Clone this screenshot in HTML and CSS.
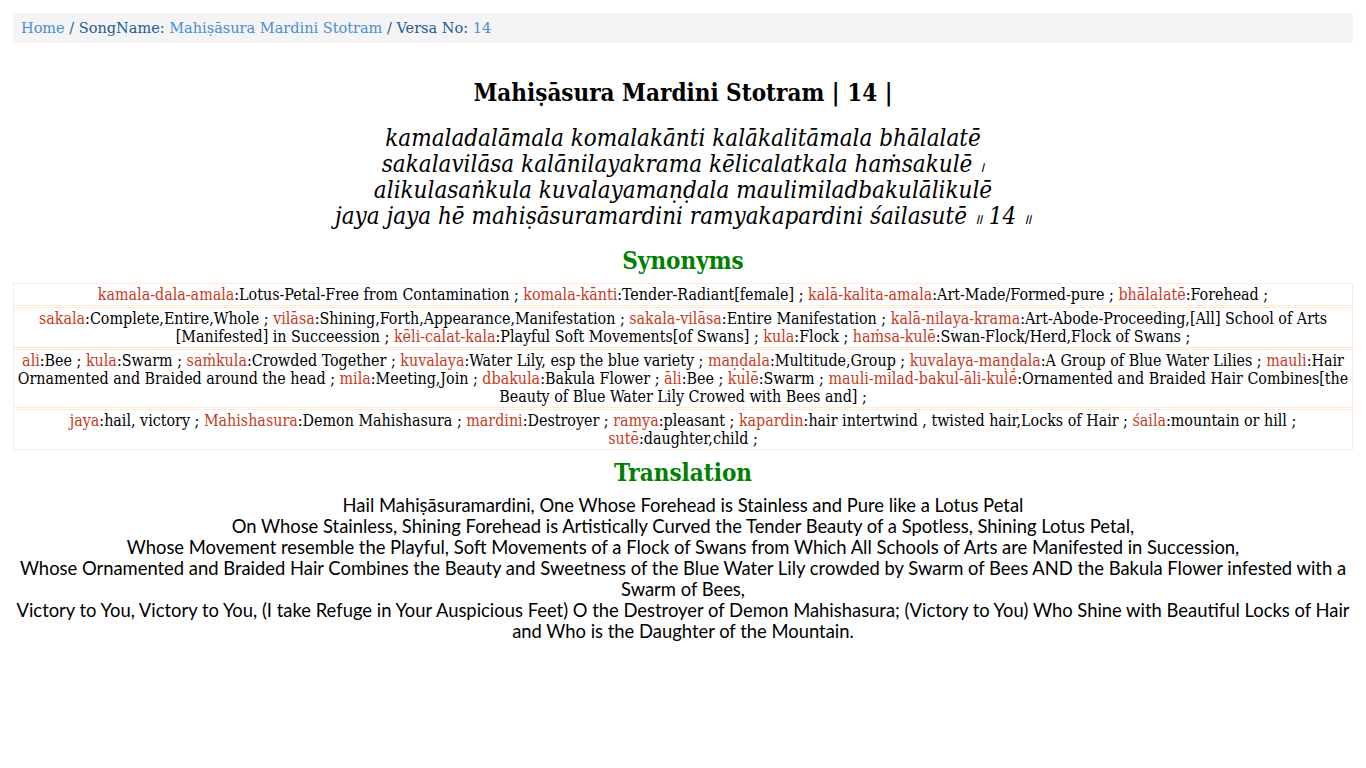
FILE: index.html
```html
<!DOCTYPE html>
<html>
<head>
<meta charset="utf-8">
<link rel="stylesheet" href="styles.css">
</head>
<body>
<div class="page">
  <nav class="crumbs">
    <a class="lnk" href="#">Home</a> <span class="dk">/ SongName:</span> <a class="lnk" href="#">Mahiṣāsura Mardini Stotram</a> <span class="dk">/ Versa No:</span> <span class="lnk">14</span>
  </nav>

  <h1 class="title">Mahiṣāsura Mardini Stotram | 14 |</h1>

  <div class="verse">
    <div class="vl">kamaladalāmala komalakānti kalākalitāmala bhālalatē</div>
    <div class="vl">sakalavilāsa kalānilayakrama kēlicalatkala haṁsakulē <span class="danda">।</span></div>
    <div class="vl">alikulasaṅkula kuvalayamaṇḍala maulimiladbakulālikulē</div>
    <div class="vl">jaya jaya hē mahiṣāsuramardini ramyakapardini śailasutē <span class="danda">॥</span> 14 <span class="danda">॥</span></div>
  </div>

  <h2 class="sec">Synonyms</h2>
  <div class="syn">
    <div class="row"><span class="w">kamala-dala-amala</span>:Lotus-Petal-Free from Contamination ; <span class="w">komala-kānti</span>:Tender-Radiant[female] ; <span class="w">kalā-kalita-amala</span>:Art-Made/Formed-pure ; <span class="w">bhālalatē</span>:Forehead ;</div>
    <div class="row"><span class="w">sakala</span>:Complete,Entire,Whole ; <span class="w">vilāsa</span>:Shining,Forth,Appearance,Manifestation ; <span class="w">sakala-vilāsa</span>:Entire Manifestation ; <span class="w">kalā-nilaya-krama</span>:Art-Abode-Proceeding,[All] School of Arts [Manifested] in Succeession ; <span class="w">kēli-calat-kala</span>:Playful Soft Movements[of Swans] ; <span class="w">kula</span>:Flock ; <span class="w">haṁsa-kulē</span>:Swan-Flock/Herd,Flock of Swans ;</div>
    <div class="row"><span class="w">ali</span>:Bee ; <span class="w">kula</span>:Swarm ; <span class="w">saṁkula</span>:Crowded Together ; <span class="w">kuvalaya</span>:Water Lily, esp the blue variety ; <span class="w">maṇḍala</span>:Multitude,Group ; <span class="w">kuvalaya-maṇḍala</span>:A Group of Blue Water Lilies ; <span class="w">mauli</span>:Hair Ornamented and Braided around the head ; <span class="w">mila</span>:Meeting,Join ; <span class="w">dbakula</span>:Bakula Flower ; <span class="w">āli</span>:Bee ; <span class="w">kulē</span>:Swarm ; <span class="w">mauli-milad-bakul-āli-kulē</span>:Ornamented and Braided Hair Combines[the Beauty of Blue Water Lily Crowed with Bees and] ;</div>
    <div class="row"><span class="w">jaya</span>:hail, victory ; <span class="w">Mahishasura</span>:Demon Mahishasura ; <span class="w">mardini</span>:Destroyer ; <span class="w">ramya</span>:pleasant ; <span class="w">kapardin</span>:hair intertwind , twisted hair,Locks of Hair ; <span class="w">śaila</span>:mountain or hill ; <span class="w">sutē</span>:daughter,child ;</div>
  </div>

  <h2 class="sec tr">Translation</h2>
  <div class="trans">
    <div>Hail Mahiṣāsuramardini, One Whose Forehead is Stainless and Pure like a Lotus Petal</div>
    <div>On Whose Stainless, Shining Forehead is Artistically Curved the Tender Beauty of a Spotless, Shining Lotus Petal,</div>
    <div>Whose Movement resemble the Playful, Soft Movements of a Flock of Swans from Which All Schools of Arts are Manifested in Succession,</div>
    <div>Whose Ornamented and Braided Hair Combines the Beauty and Sweetness of the Blue Water Lily crowded by Swarm of Bees AND the Bakula Flower infested with a Swarm of Bees,</div>
    <div>Victory to You, Victory to You, (I take Refuge in Your Auspicious Feet) O the Destroyer of Demon Mahishasura; (Victory to You) Who Shine with Beautiful Locks of Hair and Who is the Daughter of the Mountain.</div>
  </div>
</div>
</body>
</html>
```

FILE: styles.css
```css
html, body {
  margin: 0;
  padding: 0;
  background: #ffffff;
}

.page {
  padding: 13px 13px 0 13px;
  font-family: "DejaVu Serif", serif;
  color: #000;
}

.crumbs {
  background: #f4f4f4;
  height: 30px;
  line-height: 31px;
  padding: 0 8px;
  font-size: 14.5px;
  font-family: "DejaVu Serif", serif;
}

.crumbs .lnk {
  color: #4a8ed6;
  text-decoration: none;
}

.crumbs .dk {
  color: #1c5b9b;
}

.title {
  margin: 36px 0 0 0;
  text-align: center;
  font-family: "DejaVu Serif Condensed", "DejaVu Serif", serif;
  font-weight: bold;
  font-size: 24px;
  line-height: 28px;
}

.verse {
  margin-top: 18px;
  text-align: center;
  font-family: "DejaVu Serif Condensed", "DejaVu Serif", serif;
  font-style: italic;
  font-size: 24px;
  line-height: 26px;
}

.vl {
  height: 26px;
  overflow: visible;
}

.danda {
  font-size: 14px;
  line-height: 10px;
}

.sec {
  margin: 18px 0 8px 0;
  text-align: center;
  color: #008000;
  font-family: "DejaVu Serif Condensed", "DejaVu Serif", serif;
  font-weight: bold;
  font-size: 24px;
  line-height: 28px;
}

.syn {
  display: flex;
  flex-direction: column;
  gap: 1px;
}

.row {
  border: 1px solid #fdebd6;
  padding: 2px 2px 1px 2px;
  text-align: center;
  font-family: "DejaVu Serif Condensed", "DejaVu Serif", serif;
  font-size: 15.9px;
  line-height: 18px;
}

.w {
  color: #c83a1e;
}

.tr {
  margin-top: 9px;
  margin-bottom: 8px;
}

.trans {
  text-align: center;
  font-family: "Lato", "Open Sans", sans-serif;
  font-size: 18.4px;
  line-height: 21px;
}
```
